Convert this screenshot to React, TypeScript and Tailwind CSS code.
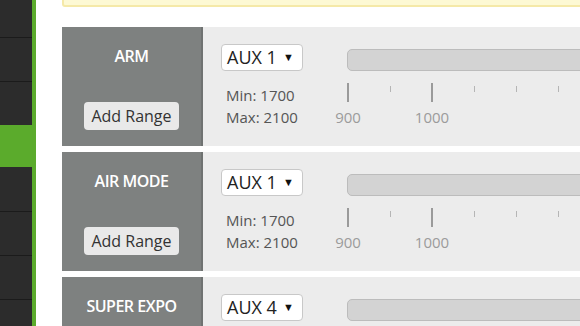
import React from 'react';

type Mode = { name: string; aux: string };

const modes: Mode[] = [
  { name: 'ARM', aux: 'AUX 1' },
  { name: 'AIR MODE', aux: 'AUX 1' },
  { name: 'SUPER EXPO', aux: 'AUX 4' },
];

const ticks = [
  { major: true, label: '900' },
  { major: false },
  { major: true, label: '1000' },
  { major: false },
  { major: false },
  { major: false },
  { major: false },
];

const Scale = () => (
  <div className="flex ml-[-20px] mt-[12px]">
    {ticks.map((t, i) => (
      <div key={i} className="w-[42px] shrink-0 flex flex-col items-center">
        {t.major ? (
          <div className="w-[2px] h-[19px] bg-[#9a9a9a]" />
        ) : (
          <div className="w-[1px] h-[6px] mt-[3px] mb-[10px] bg-[#b5b5b5]" />
        )}
        <div className="h-[20px] mt-[5px] text-[15px] leading-[20px] text-[#9b9b9b]">
          {t.label ?? ''}
        </div>
      </div>
    ))}
  </div>
);

const ModePanel = ({ mode }: { mode: Mode }) => (
  <div className="flex h-[119px] w-[560px] shrink-0">
    {/* Mode name + add range */}
    <div className="w-[139px] shrink-0 bg-[#7e8180] flex flex-col items-center">
      <div className="mt-[18px] h-[22px] text-[16px] leading-[22px] font-semibold text-white tracking-[-0.5px]">
        {mode.name}
      </div>
      <button className="mt-[35px] h-[28px] px-[7px] rounded-[4px] bg-[#e9e9e9] text-[16px] text-[#333] leading-[28px]">
        Add Range
      </button>
    </div>

    {/* Range config */}
    <div className="flex-1 bg-[#ececec] border-l-2 border-[#6f7271] flex pl-[18px] pt-[17px]">
      <div className="w-[126px] shrink-0">
        <div className="w-[82px] h-[27px] bg-white border border-[#c8c8c8] rounded-[4px] flex items-center pl-[5px] gap-[6px] text-[18px] text-[#222]">
          {mode.aux}
          <span className="text-[11px] text-[#111]">▼</span>
        </div>
        <div className="mt-[13px] pl-[5px] text-[15px] leading-[22px] text-[#555]">
          <div>Min: 1700</div>
          <div>Max: 2100</div>
        </div>
      </div>
      <div className="flex-1 pt-[5px]">
        <div className="h-[22px] rounded-[5px] bg-[#d3d3d3] border border-[#bcbcbc]" />
        <Scale />
      </div>
    </div>
  </div>
);

export default function App() {
  return (
    <div
      className="w-[580px] h-[326px] overflow-hidden flex bg-white"
      style={{ fontFamily: '"Open Sans", "Noto Sans", sans-serif' }}
    >
      {/* Sidebar */}
      <div className="w-[36px] shrink-0 bg-[#2c2c2c] border-r-4 border-[#5bab2c] flex flex-col">
        <div className="h-[38px] shrink-0 border-b border-[#1b1b1b]" />
        <div className="h-[44px] shrink-0 border-b border-[#1b1b1b]" />
        <div className="h-[43px] shrink-0" />
        <div className="h-[42px] shrink-0 bg-[#5bab2c]" />
        <div className="h-[45px] shrink-0 border-b border-[#1b1b1b]" />
        <div className="h-[44px] shrink-0 border-b border-[#1b1b1b]" />
        <div className="h-[44px] shrink-0 border-b border-[#1b1b1b]" />
      </div>

      {/* Main */}
      <div className="flex-1 pl-[26px] overflow-hidden">
        <div className="mt-[-22px] h-[29px] w-[560px] bg-[#fdf9d4] border-2 border-[#f5e9a8] rounded-[3px] px-[8px] text-[12px] leading-[26px] text-[#d8d3a4]">
          Use ranges to define the switches on your transmitter and corresponding mode assignments.
        </div>
        <div className="mt-[20px] flex flex-col gap-[6px]">
          {modes.map(m => (
            <ModePanel key={m.name} mode={m} />
          ))}
        </div>
      </div>
    </div>
  );
}
